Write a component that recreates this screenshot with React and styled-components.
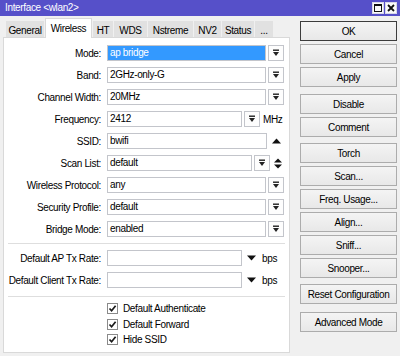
import React from 'react';
import styled, { createGlobalStyle } from 'styled-components';

const GlobalStyle = createGlobalStyle`
  html, body {
    margin: 0;
    padding: 0;
    background: #f0f0f0;
  }
  body {
    font-family: "Liberation Sans", Arial, sans-serif;
    font-size: 10px;
    letter-spacing: -0.35px;
    color: #000;
  }
`;

const Window = styled.div`
  width: 400px;
  height: 356px;
  display: flex;
  flex-direction: column;
  background: #f0f0f0;
  overflow: hidden;
`;

const TitleBar = styled.div`
  height: 16px;
  flex-shrink: 0;
  background: #5650c9;
  color: #fff;
  display: flex;
  align-items: center;
  padding: 0 3px 0 5px;
`;

const TitleText = styled.span`
  flex: 1;
  padding-bottom: 1px;
`;

const WinButton = styled.div`
  width: 12px;
  height: 12px;
  margin-left: 1px;
  box-sizing: border-box;
  background: #fafafa;
  border: 1px solid #d8d8e8;
  display: flex;
  align-items: center;
  justify-content: center;
`;

const Body = styled.div`
  flex: 1;
  display: flex;
  gap: 10px;
  padding: 0 3px 3px 3px;
`;

const LeftPane = styled.div`
  width: 287px;
  display: flex;
  flex-direction: column;
`;

const TabRow = styled.div`
  height: 21px;
  display: flex;
  align-items: flex-end;
  gap: 1px;
  padding-left: 3px;
`;

const Tab = styled.div`
  width: ${p => p.$w}px;
  height: ${p => (p.$active ? 20 : 16)}px;
  margin-bottom: ${p => (p.$active ? -1 : 0)}px;
  padding-top: ${p => (p.$active ? 0 : 1)}px;
  box-sizing: border-box;
  position: relative;
  z-index: ${p => (p.$active ? 1 : 0)};
  background: ${p => (p.$active ? '#fff' : '#e1e1e1')};
  border: 1px solid ${p => (p.$active ? '#d9d9d9' : '#e1e1e1')};
  border-bottom: none;
  display: flex;
  align-items: center;
  justify-content: center;
  white-space: nowrap;
`;

const Panel = styled.div`
  flex: 1;
  background: #fff;
  border: 1px solid #d9d9d9;
  padding-top: 7px;
`;

const FormRow = styled.div`
  display: flex;
  align-items: center;
  height: 16px;
  margin-bottom: 6px;
`;

const Label = styled.div`
  width: 97px;
  flex-shrink: 0;
  margin-right: 6px;
  text-align: right;
  white-space: nowrap;
`;

const Field = styled.div`
  width: ${p => p.$w}px;
  height: 16px;
  box-sizing: border-box;
  border: 1px solid #c3c5cb;
  background: ${p => (p.$selected ? '#3399ff' : '#fff')};
  color: ${p => (p.$selected ? '#fff' : '#000')};
  padding-left: 2px;
  line-height: 14px;
  white-space: nowrap;
  overflow: hidden;
`;

const DropButton = styled.div`
  width: 16px;
  height: 16px;
  margin-left: 2px;
  box-sizing: border-box;
  border: 1px solid #c3c5cb;
  background: #fdfdfd;
  display: flex;
  align-items: center;
  justify-content: center;
`;

const Arrow = styled.div`
  margin-left: ${p => p.$ml}px;
  display: flex;
  align-items: center;
`;

const Unit = styled.span`
  margin-left: ${p => p.$ml}px;
`;

const Separator = styled.div`
  height: 1px;
  background: #dedede;
  margin: ${p => p.$top}px 4px ${p => p.$bottom}px 4px;
`;

const CheckRow = styled.div`
  display: flex;
  align-items: center;
  height: 15.5px;
  padding-left: 103px;
`;

const CheckBox = styled.div`
  width: 11px;
  height: 11px;
  box-sizing: border-box;
  border: 1px solid #8a8a8a;
  background: #fff;
  margin-right: 5px;
  display: flex;
  align-items: center;
  justify-content: center;
`;

const RightPane = styled.div`
  width: 97px;
  display: flex;
  flex-direction: column;
  padding-top: 5px;
`;

const Button = styled.div`
  height: 20px;
  margin-top: ${p => p.$gap}px;
  box-sizing: border-box;
  border: 1px solid ${p => (p.$default ? '#3c3c3c' : '#acacac')};
  background: linear-gradient(#f4f4f4, #e8e8e8);
  display: flex;
  align-items: center;
  justify-content: center;
  white-space: nowrap;
`;

const DropIcon = () => (
  <svg width="8" height="8" viewBox="0 0 8 8">
    <rect x="1" y="0.5" width="6" height="1.4" fill="#222" />
    <path d="M1 3 H7 L4 7 Z" fill="#222" />
  </svg>
);

const DownIcon = () => (
  <svg width="9" height="6" viewBox="0 0 9 6">
    <path d="M0 0.5 H9 L4.5 5.5 Z" fill="#111" />
  </svg>
);

const UpIcon = () => (
  <svg width="9" height="6" viewBox="0 0 9 6">
    <path d="M0 5.5 H9 L4.5 0.5 Z" fill="#111" />
  </svg>
);

const UpDownIcon = () => (
  <svg width="8" height="11" viewBox="0 0 8 11">
    <path d="M0 4.5 H8 L4 0.5 Z" fill="#111" />
    <path d="M0 6.5 H8 L4 10.5 Z" fill="#111" />
  </svg>
);

const CheckIcon = () => (
  <svg width="9" height="9" viewBox="0 0 9 9">
    <path d="M1.5 4.5 L3.6 6.8 L7.6 1.8" fill="none" stroke="#1a1a1a" strokeWidth="1.7" />
  </svg>
);

const tabs = [
  { name: 'General', w: 38 },
  { name: 'Wireless', w: 47, active: true },
  { name: 'HT', w: 20 },
  { name: 'WDS', w: 33 },
  { name: 'Nstreme', w: 45 },
  { name: 'NV2', w: 27 },
  { name: 'Status', w: 32 },
  { name: '...', w: 18 }
];

const rows = [
  { label: 'Mode:', value: 'ap bridge', w: 159, drop: true, selected: true },
  { label: 'Band:', value: '2GHz-only-G', w: 159, drop: true },
  { label: 'Channel Width:', value: '20MHz', w: 159, drop: true },
  { label: 'Frequency:', value: '2412', w: 135, drop: true, unit: 'MHz' },
  { label: 'SSID:', value: 'bwifi', w: 160, after: 'up' },
  { label: 'Scan List:', value: 'default', w: 145, drop: true, after: 'updown' },
  { label: 'Wireless Protocol:', value: 'any', w: 159, drop: true },
  { label: 'Security Profile:', value: 'default', w: 159, drop: true },
  { label: 'Bridge Mode:', value: 'enabled', w: 159, drop: true }
];

const rateRows = ['Default AP Tx Rate:', 'Default Client Tx Rate:'];

const checks = ['Default Authenticate', 'Default Forward', 'Hide SSID'];

const buttons = [
  { text: 'OK', gap: 0, def: true },
  { text: 'Cancel', gap: 3 },
  { text: 'Apply', gap: 3 },
  { text: 'Disable', gap: 7 },
  { text: 'Comment', gap: 3 },
  { text: 'Torch', gap: 6 },
  { text: 'Scan...', gap: 3 },
  { text: 'Freq. Usage...', gap: 3 },
  { text: 'Align...', gap: 3 },
  { text: 'Sniff...', gap: 3 },
  { text: 'Snooper...', gap: 3 },
  { text: 'Reset Configuration', gap: 6 },
  { text: 'Advanced Mode', gap: 8 }
];

const App = () => (
  <Window>
    <GlobalStyle />
    <TitleBar>
      <TitleText>Interface &lt;wlan2&gt;</TitleText>
      <WinButton>
        <svg width="8" height="8" viewBox="0 0 8 8">
          <rect x="0.5" y="0.5" width="7" height="7" fill="none" stroke="#111" strokeWidth="1" />
          <rect x="0.5" y="0.5" width="7" height="1.5" fill="#111" />
        </svg>
      </WinButton>
      <WinButton>
        <svg width="8" height="8" viewBox="0 0 8 8">
          <path d="M1 1 L7 7 M7 1 L1 7" stroke="#111" strokeWidth="1.8" />
        </svg>
      </WinButton>
    </TitleBar>
    <Body>
      <LeftPane>
        <TabRow>
          {tabs.map(t => (
            <Tab key={t.name} $w={t.w} $active={t.active}>
              {t.name}
            </Tab>
          ))}
        </TabRow>
        <Panel>
          {rows.map(r => (
            <FormRow key={r.label}>
              <Label>{r.label}</Label>
              <Field $w={r.w} $selected={r.selected}>{r.value}</Field>
              {r.drop && (
                <DropButton>
                  <DropIcon />
                </DropButton>
              )}
              {r.unit && <Unit $ml={3}>{r.unit}</Unit>}
              {r.after === 'up' && (
                <Arrow $ml={5}>
                  <UpIcon />
                </Arrow>
              )}
              {r.after === 'updown' && (
                <Arrow $ml={4}>
                  <UpDownIcon />
                </Arrow>
              )}
            </FormRow>
          ))}
          <Separator $top={0} $bottom={6} />
          {rateRows.map(label => (
            <FormRow key={label}>
              <Label>{label}</Label>
              <Field $w={135} />
              <Arrow $ml={5}>
                <DownIcon />
              </Arrow>
              <Unit $ml={6}>bps</Unit>
            </FormRow>
          ))}
          <Separator $top={8} $bottom={4} />
          {checks.map(c => (
            <CheckRow key={c}>
              <CheckBox>
                <CheckIcon />
              </CheckBox>
              {c}
            </CheckRow>
          ))}
        </Panel>
      </LeftPane>
      <RightPane>
        {buttons.map(b => (
          <Button key={b.text} $gap={b.gap} $default={b.def}>
            {b.text}
          </Button>
        ))}
      </RightPane>
    </Body>
  </Window>
);

export default App;
